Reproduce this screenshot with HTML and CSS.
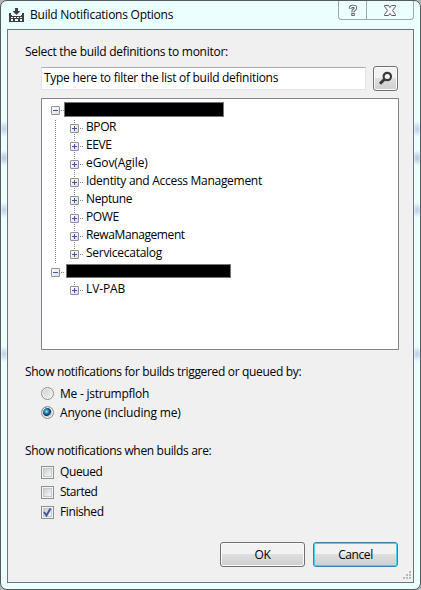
FILE: index.html
```
<!DOCTYPE html>
<html lang="en">
<head>
<meta charset="utf-8">
<title>Build Notifications Options</title>
<link rel="stylesheet" href="styles.css">
</head>
<body>
<div class="window">
  <header class="titlebar">
    <svg class="app-icon" width="15" height="16" viewBox="0 0 15 16"><path fill="#3f3f42" fill-rule="evenodd" d="M6 1h3v3h2.500L7.500 8 3.500 4H6zM0 6h2v2h1v1h9V8h1V6h2v9H0zM2 10v1h2v-1zM5 10v1h2v-1zM8 10v1h2v-1zM11 10v1h2v-1zM2 12v2h2v-2zM6 12v2h3v-2zM11 12v2h2v-2z"/></svg>
    <h1 class="title">Build Notifications Options</h1>
    <div class="caption">
      <button class="cap help" aria-label="Help"><svg width="10" height="13" viewBox="0 0 12 14"><path d="M3 5V4q0-2 3-2t3 2q0 1.500-2 2.500Q6 7 6 9" fill="none" stroke="#53586b" stroke-width="4"/><path d="M4 10h4v3.500H4z" fill="#53586b"/><path d="M3 4.500V4q0-2 3-2t3 2q0 1.500-2 2.500Q6 7 6 8.500M6 11v1.500" fill="none" stroke="#f5f5f5" stroke-width="1.800"/></svg></button>
      <button class="cap close" aria-label="Close"><svg width="12" height="11" viewBox="0 0 12 11"><path d="M.5.5h4L6 2.500 7.500.5h4v1L8.500 5.500l3 4v1h-4L6 8.500l-1.500 2h-4v-1l3-4-3-4z" fill="#f7f7f7" stroke="#555a6d"/></svg></button>
    </div>
  </header>
  <main class="client">
    <div class="label monitor">Select the build definitions to monitor:</div>
    <div class="filter">
      <div class="field"><span class="hint">Type here to filter the list of build definitions</span></div>
      <button class="btn search" aria-label="Search"><svg width="15" height="15" viewBox="0 0 15 15" fill="none" stroke="#3c3c3c"><circle cx="9.300" cy="5.500" r="3.700" stroke-width="2.200"/><path d="M6.800 8L2 12.800" stroke-width="3"/></svg></button>
    </div>
    <div class="tree">
      <div class="root"><i class="box minus"></i><i class="dots"></i><b class="bar first"></b></div>
      <div class="children open">
        <div class="node"><i class="box plus"></i><i class="dots"></i><span class="n1">BPOR</span></div>
        <div class="node"><i class="box plus"></i><i class="dots"></i><span class="n2">EEVE</span></div>
        <div class="node"><i class="box plus"></i><i class="dots"></i><span class="n3">eGov(Agile)</span></div>
        <div class="node"><i class="box plus"></i><i class="dots"></i><span class="n4">Identity and Access Management</span></div>
        <div class="node"><i class="box plus"></i><i class="dots"></i><span class="n5">Neptune</span></div>
        <div class="node"><i class="box plus"></i><i class="dots"></i><span class="n6">POWE</span></div>
        <div class="node"><i class="box plus"></i><i class="dots"></i><span class="n7">RewaManagement</span></div>
        <div class="node"><i class="box plus"></i><i class="dots"></i><span class="n8">Servicecatalog</span></div>
      </div>
      <div class="root"><i class="box minus"></i><i class="dots"></i><b class="bar second"></b></div>
      <div class="children">
        <div class="node"><i class="box plus"></i><i class="dots"></i><span class="n9">LV-PAB</span></div>
      </div>
    </div>
    <div class="label triggered">Show notifications for builds triggered or queued by:</div>
    <div class="radios">
      <div class="option"><i class="radio"></i><span class="o1">Me - jstrumpfloh</span></div>
      <div class="option"><i class="radio on"></i><span class="o2">Anyone (including me)</span></div>
    </div>
    <div class="label when">Show notifications when builds are:</div>
    <div class="checks">
      <div class="option"><i class="check"></i><span class="o3">Queued</span></div>
      <div class="option"><i class="check"></i><span class="o4">Started</span></div>
      <div class="option"><i class="check"><svg width="11" height="11" viewBox="0 0 11 11"><path d="M2 5l2.500 3.500L8.500 1.500" fill="none" stroke="#42549b" stroke-width="2"/></svg></i><span class="o5">Finished</span></div>
    </div>
    <div class="actions">
      <button class="btn">OK</button>
      <button class="btn default">Cancel</button>
    </div>
    <svg class="grip" width="10" height="10" viewBox="0 0 10 10"><path fill="#b9b9b9" d="M7 0h2v2H7zM4 3h2v2H4zM7 3h2v2H7zM1 6h2v2H1zM4 6h2v2H4zM7 6h2v2H7z"/></svg>
  </main>
</div>
</body>
</html>
```
FILE: styles.css
```
* { box-sizing: border-box; }
body {
  margin: 0;
  background: #aeb4b6;
  font: 12px/18px "Open Sans", "Noto Sans", sans-serif;
  letter-spacing: -0.4px;
  color: #000;
}
button { font: inherit; letter-spacing: inherit; padding: 0; margin: 0; color: #000; }
.window {
  width: 421px;
  height: 590px;
  padding: 0 6px 6px;
  border: 1px solid #55595a;
  border-radius: 7px;
  background:
    radial-gradient(ellipse 5px 8px at 3px 128px, #bccde9, transparent),
    radial-gradient(ellipse 5px 8px at 3px 157px, #b3c2df, transparent),
    radial-gradient(ellipse 5px 8px at 3px 209px, #bccde9, transparent),
    radial-gradient(ellipse 5px 8px at 3px 353px, #bccde9, transparent),
    radial-gradient(ellipse 5px 8px at 416px 128px, #bccde9, transparent),
    radial-gradient(ellipse 5px 8px at 416px 157px, #b3c2df, transparent),
    radial-gradient(ellipse 5px 8px at 416px 209px, #bccde9, transparent),
    radial-gradient(ellipse 5px 8px at 416px 353px, #bccde9, transparent),
    #ebffff;
}
.titlebar { display: flex; height: 28px; padding-left: 2px; }
.app-icon { margin-top: 6px; }
.title {
  margin: 5px 0 0 6px;
  font-size: 12px;
  font-weight: 400;
  letter-spacing: -0.24px;
  white-space: nowrap;
}
.caption {
  display: flex;
  width: 76px;
  height: 19px;
  margin-left: auto;
  border: 1px solid #9da8ac;
  border-top: 0;
  border-radius: 0 0 4px 4px;
}
.cap { display: flex; align-items: center; justify-content: center; border: 0; background: none; }
.help { width: 28px; border-right: 1px solid #9da8ac; }
.close { flex: 1; }
.client {
  position: relative;
  height: 554px;
  padding: 13px 15px 0 17px;
  border: 1px solid #6f7576;
  background: #f0f0f0;
}
.label { white-space: nowrap; height: 18px; }
.monitor { letter-spacing: -0.28px; }
.filter { display: flex; gap: 7px; margin: 5px 0 0 16px; height: 25px; align-items: center; }
.field {
  width: 325px;
  height: 23px;
  padding: 1px 0 0 2px;
  border: 1px solid #e2e3ea;
  border-top-color: #abadb3;
  border-radius: 1px;
  background: #fff;
  letter-spacing: -0.28px;
  white-space: nowrap;
}
.btn {
  width: 85px;
  height: 25px;
  border: 1px solid #707070;
  border-radius: 3px;
  background: linear-gradient(#f2f2f2 0 48%, #dedede 50%, #cfcfcf);
  box-shadow: inset 0 0 0 1px #fafafa;
}
.search { display: flex; align-items: center; justify-content: center; width: 25px; }
.default { border-color: #3c7fb1; box-shadow: inset 0 0 0 1px #48d1f7; }
.tree {
  width: 358px;
  height: 252px;
  margin: 7px 0 0 16px;
  padding: 2px 0 0 9px;
  border: 1px solid #828790;
  background: #fff;
}
.root, .node { display: flex; align-items: center; height: 18px; }
.box {
  flex: none;
  width: 9px;
  height: 9px;
  margin-top: 1px;
  border: 1px solid #919191;
  border-radius: 1px;
  background:
    linear-gradient(#3d569c, #3d569c) center / 5px 1px no-repeat,
    linear-gradient(135deg, #fff, #dedede);
}
.plus {
  background:
    linear-gradient(#3d569c, #3d569c) center / 5px 1px no-repeat,
    linear-gradient(#3d569c, #3d569c) center / 1px 5px no-repeat,
    linear-gradient(135deg, #fff, #dedede);
}
.dots {
  width: 4px;
  height: 1px;
  margin-top: 1px;
  background: repeating-linear-gradient(90deg, transparent 0 1px, #808080 1px 2px);
}
.bar { border: 1px solid #777; background: #000; }
.first { width: 160px; height: 15px; margin-top: -1px; }
.second { width: 165px; height: 14px; margin: -2px 0 0 2px; }
.children {
  padding-left: 19px;
  background: repeating-linear-gradient(transparent 0 1px, #808080 1px 2px) 23px 0 / 1px calc(100% - 9px) no-repeat;
}
.open {
  background:
    repeating-linear-gradient(transparent 0 1px, #808080 1px 2px) 4px 0 / 1px 100% no-repeat,
    repeating-linear-gradient(transparent 0 1px, #808080 1px 2px) 23px 0 / 1px calc(100% - 9px) no-repeat;
}
.node span { margin: -3px 0 0 3px; white-space: nowrap; }
.n3 { letter-spacing: -0.08px; }
.n4 { letter-spacing: -0.29px; }
.n8 { letter-spacing: -0.28px; }
.n9 { letter-spacing: -0.1px; }
.triggered { margin-top: 13px; letter-spacing: -0.33px; }
.radios { margin: 3px 0 0 16px; }
.option { display: flex; align-items: center; gap: 6px; height: 20px; white-space: nowrap; }
.radios .option { height: 19px; }
.radios span { margin-top: 1px; }
.o1 { letter-spacing: -0.24px; }
.o2 { letter-spacing: -0.17px; }
.o4 { letter-spacing: -0.5px; }
.radio {
  width: 13px;
  height: 13px;
  border: 1px solid #8e8f8f;
  border-radius: 50%;
  background: linear-gradient(135deg, #c9ccce, #f7f7f7);
  box-shadow: inset 0 0 0 1px #f4f4f4;
}
.on { background: radial-gradient(circle at 4.500px 4.500px, #9ee5fb 0, #278bb8 2px, #0b3158 4px, #c3cbd0 4.800px); }
.when { margin-top: 20px; letter-spacing: -0.33px; }
.checks { margin: 2px 0 0 16px; }
.check {
  width: 13px;
  height: 13px;
  border: 1px solid #8e8f8f;
  background: linear-gradient(135deg, #cacfd5, #f6f6f6) center / 7px 7px no-repeat #f4f4f4;
  box-shadow: inset 0 0 0 1px #f4f4f4, inset 0 0 0 2px #c4c8cb;
}
.check svg { display: block; }
.actions { display: flex; justify-content: flex-end; gap: 8px; margin-top: 20px; }
.grip { position: absolute; right: 1px; bottom: 1px; }
```
